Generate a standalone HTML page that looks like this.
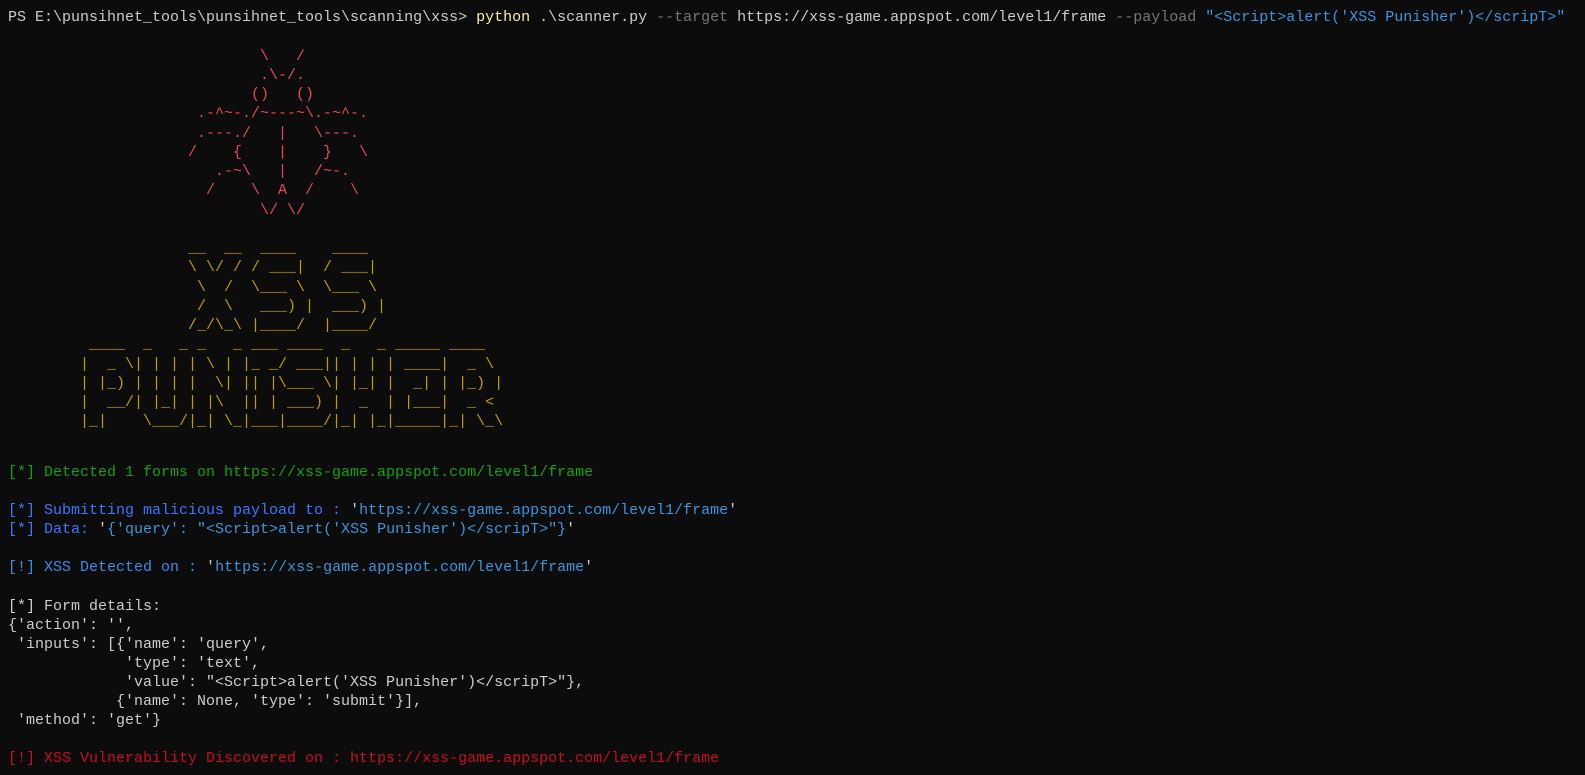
<!DOCTYPE html>
<html><head><meta charset="utf-8"><style>
html,body{margin:0;padding:0;background:#0c0c0c;width:1585px;height:775px;overflow:hidden;position:relative}
pre{margin:0;position:absolute;left:8px;font-family:"Liberation Mono",monospace;font-size:15px;letter-spacing:0;line-height:19.1px;color:#cccccc;white-space:pre}
.y{color:#f9f1a5}.g{color:#767676}.c{color:#3a96dd}.r{color:#e74856}.o{color:#c19c00}
.gr{color:#13a10e}.b{color:#3b78ff}.w{color:#cccccc}.rd{color:#c50f1f}.bb{color:#3b8eea}
</style></head><body><pre style="top:8px;line-height:19.25px">PS E:\punsihnet_tools\punsihnet_tools\scanning\xss&gt; <span class="y">python</span> .\scanner.py <span class="g">--target</span> https://xss-game.appspot.com/level1/frame <span class="g">--payload</span> <span class="c">"&lt;Script&gt;alert('XSS Punisher')&lt;/scripT&gt;"</span>

<span class="r">                            \   /
                            .\-/.
                           ()   ()
                     .-^~-./~---~\.-~^-.
                     .---./   |   \---.
                    /    {    |    }   \
                       .-~\   |   /~-.
                      /    \  A  /    \
                            \/ \/</span>

<span class="o">                    __  __  ____    ____
                    \ \/ / / ___|  / ___|
                     \  /  \___ \  \___ \
                     /  \   ___) |  ___) |
                    /_/\_\ |____/  |____/
         ____  _   _ _   _ ___ ____  _   _ _____ ____
        |  _ \| | | | \ | |_ _/ ___|| | | | ____|  _ \
        | |_) | | | |  \| || |\___ \| |_| |  _| | |_) |
        |  __/| |_| | |\  || | ___) |  _  | |___|  _ &lt;
        |_|    \___/|_| \_|___|____/|_| |_|_____|_| \_\</span></pre>
<pre style="top:463px"><span class="gr">[*] Detected 1 forms on https://xss-game.appspot.com/level1/frame</span>

<span class="b">[*] Submitting malicious payload to : </span><span class="w">'</span><span class="c">https://xss-game.appspot.com/level1/frame</span><span class="w">'</span>
<span class="b">[*] Data: </span><span class="w">'</span><span class="c">{'query': "&lt;Script&gt;alert('XSS Punisher')&lt;/scripT&gt;"}</span><span class="w">'</span>

<span class="bb">[!] XSS Detected on : </span><span class="w">'</span><span class="c">https://xss-game.appspot.com/level1/frame</span><span class="w">'</span>

[*] Form details:
{'action': '',
 'inputs': [{'name': 'query',
             'type': 'text',
             'value': "&lt;Script&gt;alert('XSS Punisher')&lt;/scripT&gt;"},
            {'name': None, 'type': 'submit'}],
 'method': 'get'}

<span class="rd">[!] XSS Vulnerability Discovered on : https://xss-game.appspot.com/level1/frame</span></pre>
</body></html>
